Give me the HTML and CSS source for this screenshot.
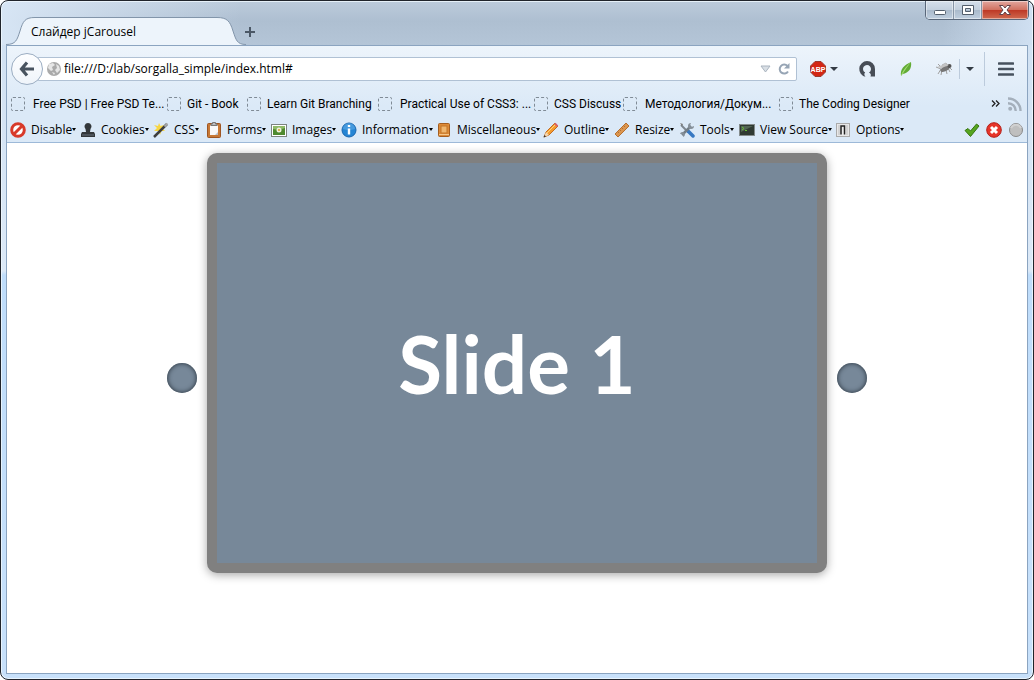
FILE: index.html
```html
<!DOCTYPE html>
<html lang="ru">
<head>
<meta charset="utf-8">
<title>Слайдер jCarousel</title>
<link rel="stylesheet" href="styles.css">
</head>
<body>
<div class="window">
  <header class="titlebar">
    <div class="tab">
      <svg class="tab-shape" viewBox="0 0 240 28" width="240" height="28" aria-hidden="true"><path d="M0 28V27.500C10 27.500 11 23 14 14C17 4 19 .5 29 .5H211C221 .5 224 4 227 14C230 23 231 27.500 240 27.500V28Z" fill="#edf4fb"/><path d="M0 27.500C10 27.500 11 23 14 14C17 4 19 .5 29 .5H211C221 .5 224 4 227 14C230 23 231 27.500 240 27.500" fill="none" stroke="#8295aa"/></svg>
      <span class="tab-title">Слайдер jCarousel</span>
    </div>
    <button class="new-tab" aria-label="New tab"><svg width="12" height="12" viewBox="0 0 12 12"><path d="M6 1V11M1 6H11" stroke="#4b5866" stroke-width="2"/></svg></button>
    <div class="controls">
      <button class="ctl" aria-label="Minimize"><svg width="14" height="14" viewBox="0 0 14 14"><rect x="1.500" y="7.500" width="11" height="4" rx="1" fill="#fff" stroke="#535e6c"/></svg></button>
      <button class="ctl" aria-label="Maximize"><svg width="14" height="14" viewBox="0 0 14 14"><path d="M1.500 2.500H12.500V11.500H1.500ZM4.500 5.500V8.500H9.500V5.500Z" fill="#fff" fill-rule="evenodd" stroke="#535e6c"/></svg></button>
      <button class="ctl close" aria-label="Close"><svg width="14" height="14" viewBox="0 0 14 14"><path d="M1.500 2.500H5L7 5L9 2.500H12.500L9 7L12.500 11.500H9L7 9L5 11.500H1.500L5 7Z" fill="#fff" stroke="#61434a"/></svg></button>
    </div>
  </header>
  <div class="client">
    <div class="chrome">
      <nav class="navbar">
        <button class="back" aria-label="Back"><svg width="16" height="16" viewBox="0 0 16 16"><path d="M8 1.500L2.500 8L8 14.500M3 8H15" fill="none" stroke="#48535f" stroke-width="3.200"/></svg></button>
        <div class="urlbox">
          <svg width="16" height="16" viewBox="0 0 16 16"><circle cx="8" cy="8" r="7" fill="#aaa"/><path d="M3 3L7 2L9 4L6 6L7 9L5 10L2 7ZM10 3L13 5L14 9L11 12L9 9L11 7ZM6 11L9 12L8 14Z" fill="#e6e6e6"/></svg>
          <input class="url" type="text" aria-label="Address" value="file:///D:/lab/sorgalla_simple/index.html#">
          <button class="plain" aria-label="History"><svg width="11" height="8" viewBox="0 0 11 8"><path d="M1 1H10L5.500 7Z" fill="#d9dfe5" stroke="#aab4bf"/></svg></button>
          <button class="plain" aria-label="Reload"><svg width="14" height="14" viewBox="0 0 14 14"><path d="M10.500 4A4.500 4.500 0 1 0 11 9.500" fill="none" stroke="#97a5b5" stroke-width="2"/><path d="M12.500 1V6.500H7Z" fill="#97a5b5"/></svg></button>
        </div>
        <div class="addons">
          <button class="plain abp" aria-label="Adblock Plus"><svg width="16" height="16" viewBox="0 0 16 16"><path d="M5 .5H11L15.500 5V11L11 15.500H5L.5 11V5Z" fill="#d32614" stroke="#9a3a30"/><text x="8" y="11" class="abp-text" text-anchor="middle">ABP</text></svg><i class="drop"></i></button>
          <button class="plain" aria-label="Avast"><svg width="18" height="18" viewBox="0 0 18 18"><path d="M9 1A8 8 0 0 1 17 9V16.500H12.500C13.500 14.500 12.500 13.300 11 12.500A4 4 0 1 0 7.200 12.600C6 13.500 6 15 7.500 16.800A8 8 0 0 1 9 1Z" fill="#474d56"/></svg></button>
          <button class="plain leaf" aria-label="Leaf"><svg width="12" height="16" viewBox="0 0 12 16"><path d="M1 15C0 8 4 4 11 1C12 7 9 12 2.500 13Z" fill="#62ab35"/><path d="M1 15C2 10 6 6 11 1C8 5 5 9 2.500 13Z" fill="#a4dc72"/></svg></button>
          <button class="plain fly" aria-label="Firebug"><svg width="17" height="14" viewBox="0 0 17 14"><path d="M0 5L5 7L2 12M6 8L5 13M10 8L11 12M5 5L2 2M13 5L16 8M12 6L14 10" fill="none" stroke="#a0a0a0"/><path d="M1 5L9 2L15 3L9 7Z" fill="#c4c4c4"/><ellipse cx="9" cy="7" rx="5" ry="2.200" transform="rotate(-25 9 7)" fill="#777"/><circle cx="13.500" cy="4" r="2" fill="#555"/><path d="M6 3L10 1L12 4" stroke="#b2b2b2" fill="none"/></svg></button>
          <button class="plain split" aria-label="Firebug options"><i class="drop"></i></button>
        </div>
        <button class="menu" aria-label="Menu"><svg width="16" height="14" viewBox="0 0 16 14"><path d="M1 1.500H15M1 7H15M1 12.500H15" stroke="#47525e" stroke-width="2.600" stroke-linecap="round"/></svg></button>
      </nav>
      <nav class="bookmarks">
        <a class="mark wide" href="#"><i class="blank"></i><span>Free PSD | Free PSD Te...</span></a>
        <a class="mark" href="#"><i class="blank"></i><span>Git - Book</span></a>
        <a class="mark" href="#"><i class="blank"></i><span>Learn Git Branching</span></a>
        <a class="mark wide" href="#"><i class="blank"></i><span>Practical Use of CSS3: ...</span></a>
        <a class="mark" href="#"><i class="blank"></i><span>CSS Discuss</span></a>
        <a class="mark wide" href="#"><i class="blank"></i><span>Методология/Докум...</span></a>
        <a class="mark" href="#"><i class="blank"></i><span>The Coding Designer</span></a>
        <div class="mark-end">
          <button class="plain" aria-label="More bookmarks"><svg width="9" height="7" viewBox="0 0 9 7"><path d="M1 .5L4 3.500L1 6.500M5 .5L8 3.500L5 6.500" fill="none" stroke="#222" stroke-width="1.300"/></svg></button>
          <button class="plain" aria-label="Feed"><svg width="14" height="14" viewBox="0 0 14 14"><circle cx="2.200" cy="11.800" r="2" fill="#a4afbb"/><path d="M0 6.200A7.600 7.600 0 0 1 7.700 14M0 1.500A12.300 12.300 0 0 1 12.500 14" fill="none" stroke="#a4afbb" stroke-width="2.400"/></svg></button>
        </div>
      </nav>
      <nav class="devbar">
        <button class="tool"><svg width="16" height="16" viewBox="0 0 16 16"><circle cx="8" cy="8" r="6.300" fill="#fff" stroke="#d83a2a" stroke-width="3"/><path d="M3.500 12.500L12.500 3.500" stroke="#d83a2a" stroke-width="3"/></svg><span>Disable</span></button>
        <button class="tool"><svg width="16" height="16" viewBox="0 0 16 16"><path d="M8 1A3.500 3.500 0 0 1 10.500 7L10 10H14L15 12V15H1V12L2 10H6L5.500 7A3.500 3.500 0 0 1 8 1Z" fill="#33373a"/><path d="M2 13H14" stroke="#69717a"/></svg><span>Cookies</span></button>
        <button class="tool"><svg width="16" height="16" viewBox="0 0 16 16"><path d="M6 1L7.500 4L11 3L9.500 6.500L12 9L8.500 9L7 13L5.500 9L1 9L4 6L1 3L5 4Z" fill="#f8d643"/><path d="M1 15L14 2" stroke="#3e3e3e" stroke-width="2.500"/><path d="M11.500 4.500L14.500 1.500" stroke="#a8a8a8" stroke-width="2"/></svg><span>CSS</span></button>
        <button class="tool"><svg width="16" height="16" viewBox="0 0 16 16"><rect x="1.500" y="1.500" width="13" height="14" rx="1" fill="#c77835" stroke="#9e5522"/><path d="M4 3.500H12V13H4Z" fill="#f8f8f8"/><path d="M9 13L12 10V13Z" fill="#b9c0c8"/><path d="M5 3.500V2H6.500V.5H9.500V2H11V3.500Z" fill="#bbb" stroke="#777"/></svg><span>Forms</span></button>
        <button class="tool"><svg width="16" height="16" viewBox="0 0 16 16"><rect x=".5" y="2.500" width="15" height="12" fill="#fff" stroke="#7c8480"/><rect x="2" y="4" width="12" height="9" fill="#4f8a30"/><path d="M2 4H14V6L8 8L2 7Z" fill="#8fba68"/><circle cx="8" cy="8" r="2.500" fill="#eef1df"/><circle cx="8" cy="8" r="1" fill="#d4a226"/></svg><span>Images</span></button>
        <button class="tool"><svg width="16" height="16" viewBox="0 0 16 16"><circle cx="8" cy="8" r="7" fill="#2585d4" stroke="#1966af"/><path d="M2 7A6 6 0 0 1 14 7Q8 9 2 7Z" fill="#67b0e8" opacity=".5"/><path d="M8 3V5M8 6.500V12.500" stroke="#fff" stroke-width="2.400"/></svg><span>Information</span></button>
        <button class="tool"><svg width="16" height="16" viewBox="0 0 16 16"><rect x="2.500" y="1.500" width="11" height="13" rx="1" fill="#dd8b38" stroke="#a45e20"/><rect x="5" y="4" width="6" height="7" fill="#efb66e" stroke="#c37628"/><path d="M3 12.500H13" stroke="#f4c88d"/></svg><span>Miscellaneous</span></button>
        <button class="tool"><svg width="16" height="16" viewBox="0 0 16 16"><path d="M1 15L3 10L12 1L15 4L6 13Z" fill="#f49b2e" stroke="#c36c21"/><path d="M4 11L12 3" stroke="#ffd37a"/><path d="M11 2L12.500 .8L15.200 3.500L14 5Z" fill="#d9636b"/><path d="M1 15L3 10L6 13Z" fill="#f4d8b1"/><path d="M.5 15.500L1.500 13L3 14.500Z" fill="#333"/></svg><span>Outline</span></button>
        <button class="tool"><svg width="16" height="16" viewBox="0 0 16 16"><path d="M1 12L12 1L15 4L4 15Z" fill="#db964f" stroke="#b66f2e"/><path d="M4 10L5 11M6 8L7 9M8 6L9 7M10 4L11 5" stroke="#b06f38"/></svg><span>Resize</span></button>
        <button class="tool"><svg width="16" height="16" viewBox="0 0 16 16"><path d="M2 3L9 10" stroke="#7c868f" stroke-width="2"/><path d="M9 9L14 14" stroke="#3778c2" stroke-width="3.500" stroke-linecap="round"/><path d="M3 13L12 4" stroke="#727d86" stroke-width="2.500"/><path d="M12 1A3 3 0 1 0 15 4L12.500 5L11 3.500ZM4 15A2.500 2.500 0 1 0 1 12L3 12L4 13Z" fill="#858f98"/><path d="M1 1L4 2L3 4Z" fill="#777"/></svg><span>Tools</span></button>
        <button class="tool"><svg width="16" height="16" viewBox="0 0 16 16"><rect x=".5" y="2.500" width="15" height="11" fill="#303a32" stroke="#848b8b"/><path d="M2 4H14L2 10Z" fill="#526453"/><path d="M3 5L5 6.500L3 8M6 8.500H8" fill="none" stroke="#68bf32"/></svg><span>View Source</span></button>
        <button class="tool"><svg width="16" height="16" viewBox="0 0 16 16"><rect x="1.500" y="1.500" width="13" height="13" fill="#e8e8e8" stroke="#aaa"/><path d="M3 3H5V13H3ZM11 3H13V13H11Z" fill="#d2d2d2"/><path d="M6 12.500V4H9.500V12.500" fill="#eee" stroke="#222" stroke-width="1.500"/></svg><span>Options</span></button>
        <div class="status">
          <svg width="16" height="16" viewBox="0 0 16 16"><path d="M1 8.500L4 6.500L6.500 9L12.500 2L15 4L6.500 14.500Z" fill="#56a51f" stroke="#37750f"/></svg>
          <svg width="16" height="16" viewBox="0 0 16 16"><circle cx="8" cy="8" r="7.300" fill="#e6352a" stroke="#b51e18"/><path d="M5 5L11 11M11 5L5 11" stroke="#fff" stroke-width="3"/></svg>
          <svg width="16" height="16" viewBox="0 0 16 16"><circle cx="8" cy="8" r="6.500" fill="#bfbfbf" stroke="#8a8a8a"/><path d="M3 6A5.500 5.500 0 0 1 13 6" fill="none" stroke="#d0d0d0" stroke-width="2"/></svg>
        </div>
      </nav>
    </div>
    <main class="page">
      <div class="carousel">
        <button class="arrow" aria-label="Previous slide"></button>
        <section class="slide"><h1 class="slide-title">Slide 1</h1></section>
        <button class="arrow" aria-label="Next slide"></button>
      </div>
    </main>
  </div>
</div>
</body>
</html>
```
FILE: styles.css
```css
* { box-sizing: border-box; }
body {
  margin: 0;
  background: #fff;
  color: #000;
  font: 12px/16px "Open Sans", "Noto Sans", sans-serif;
}
button {
  padding: 0;
  border: 0;
  background: none;
  color: inherit;
  font: inherit;
}
svg { display: block; flex: none; }

.window {
  display: flex;
  flex-direction: column;
  min-height: 100vh;
  padding: 0 5px 5px;
  border: 1px solid #20242b;
  border-radius: 8px;
  background:
    linear-gradient(90deg, rgba(219, 233, 248, .9), rgba(219, 233, 248, 0) 240px) 0 0 / 100% 44px no-repeat,
    linear-gradient(270deg, rgba(211, 227, 245, .9), rgba(211, 227, 245, 0) 90px) 0 0 / 100% 44px no-repeat,
    linear-gradient(#bccbdb, #aebfd1 20px, #b4c5d7) 0 0 / 100% 44px no-repeat,
    linear-gradient(#cfe0f2, #dce9f7 270px, #bfddfb 274px, #c8e1fb);
  box-shadow: inset 0 0 0 1px rgba(240, 249, 255, .8);
}

.titlebar { display: flex; height: 44px; }
.tab {
  position: relative;
  width: 240px;
  height: 28px;
  margin-top: 16px;
  padding: 7px 25px;
}
.tab-shape { position: absolute; top: 0; left: 0; }
.tab-title { position: relative; }
.new-tab {
  display: grid;
  place-items: center;
  width: 16px;
  height: 28px;
  margin-top: 17px;
  margin-right: auto;
  margin-left: -4px;
}
.controls {
  display: flex;
  height: 19px;
  margin-right: -1px;
  border: 1px solid #59677a;
  border-top: 0;
  border-radius: 0 0 5px 5px;
  overflow: hidden;
}
.ctl {
  display: grid;
  place-items: center;
  width: 28px;
  border-right: 1px solid #8795a6;
  background: linear-gradient(#d5dfeb, #c2cfdd 50%, #a9b9cb 50%, #c0cfdf);
  box-shadow: inset 0 0 0 1px rgba(255, 255, 255, .45);
}
.ctl.close {
  width: 46px;
  border: 0;
  background: linear-gradient(#e2a79f, #d0705f 50%, #bd3724 50%, #cf6a50);
}

.client {
  display: flex;
  flex: 1;
  flex-direction: column;
  border: 1px solid #8ba4c0;
  background: #fff;
}
.chrome {
  border-bottom: 1px solid #9db9d8;
  background: linear-gradient(#edf4fb, #dbe9f7 60px);
}

.navbar {
  display: flex;
  align-items: center;
  height: 45px;
  padding-left: 4px;
}
.back {
  z-index: 1;
  display: grid;
  place-items: center;
  width: 32px;
  height: 32px;
  border: 1px solid #9badc2;
  border-radius: 50%;
  background: linear-gradient(#fdfeff, #eff4fa);
}
.urlbox {
  display: flex;
  flex: 1;
  align-items: center;
  gap: 6px;
  height: 24px;
  margin-left: -6px;
  padding: 0 5px 0 8px;
  border: 1px solid #b0c1d4;
  border-radius: 2px;
  background: #fff;
}
.url {
  flex: 1;
  min-width: 0;
  margin-left: -4px;
  padding: 0;
  border: 0;
  background: none;
  color: #000;
  font: inherit;
  outline: 0;
}
.plain { display: flex; align-items: center; gap: 4px; }
.addons {
  display: flex;
  align-items: center;
  gap: 20px;
  height: 20px;
  padding: 0 10px 0 13px;
}
.abp-text {
  fill: #fff;
  font: bold 7px "Liberation Sans", sans-serif;
}
.drop {
  width: 8px;
  border: 4px solid transparent;
  border-top-color: #333b44;
  border-bottom: 0;
}
.leaf { justify-content: center; width: 20px; }
.fly { margin-right: -14px; }
.split { height: 20px; padding-left: 6px; border-left: 1px solid #bccbdc; }
.menu {
  display: grid;
  place-items: center;
  width: 43px;
  height: 34px;
  border-left: 1px solid #bccbdc;
}

.bookmarks {
  display: grid;
  grid-template-columns: 156px 80px 131px 156px 89px 156px auto 1fr;
  align-items: center;
  height: 25px;
  padding: 0 5px 0 4px;
  font-family: Roboto, "Noto Sans", sans-serif;
  white-space: nowrap;
}
.mark { display: flex; align-items: center; gap: 6px; color: inherit; text-decoration: none; }
.mark.wide { gap: 8px; }
.blank {
  flex: none;
  width: 14px;
  height: 14px;
  border: 1px dashed #808b96;
  border-radius: 2px;
}
.mark-end { display: flex; justify-content: flex-end; gap: 8px; }

.devbar {
  display: grid;
  grid-template-columns: 70px 73px 53px 65px 70px 95px 107px 71px 65px 60px 96px auto 1fr;
  align-items: center;
  height: 26px;
  padding: 1px 3px 0;
  white-space: nowrap;
}
.tool { display: flex; align-items: center; gap: 5px; }
.tool span { display: flex; align-items: center; }
.tool span::after {
  content: "";
  border: 2px solid transparent;
  border-top: 3px solid #000;
  border-bottom: 0;
}
.status { display: flex; justify-content: flex-end; gap: 6px; }

.page { flex: 1; padding: 10px 0; }
.carousel {
  display: flex;
  align-items: center;
  justify-content: center;
  gap: 10px;
}
.slide {
  display: grid;
  place-items: center;
  width: 620px;
  height: 420px;
  border: 10px solid #808080;
  border-radius: 10px;
  background: #789;
  box-shadow: 0 2px 10px rgba(0, 0, 0, .35);
}
.slide-title {
  margin: 0;
  color: #fff;
  font: bold 80px/96px Lato, "Liberation Sans", sans-serif;
}
.arrow {
  width: 30px;
  height: 30px;
  margin-top: 30px;
  border-radius: 50%;
  background: #789;
  box-shadow: inset 0 0 5px #222c36;
}
```
